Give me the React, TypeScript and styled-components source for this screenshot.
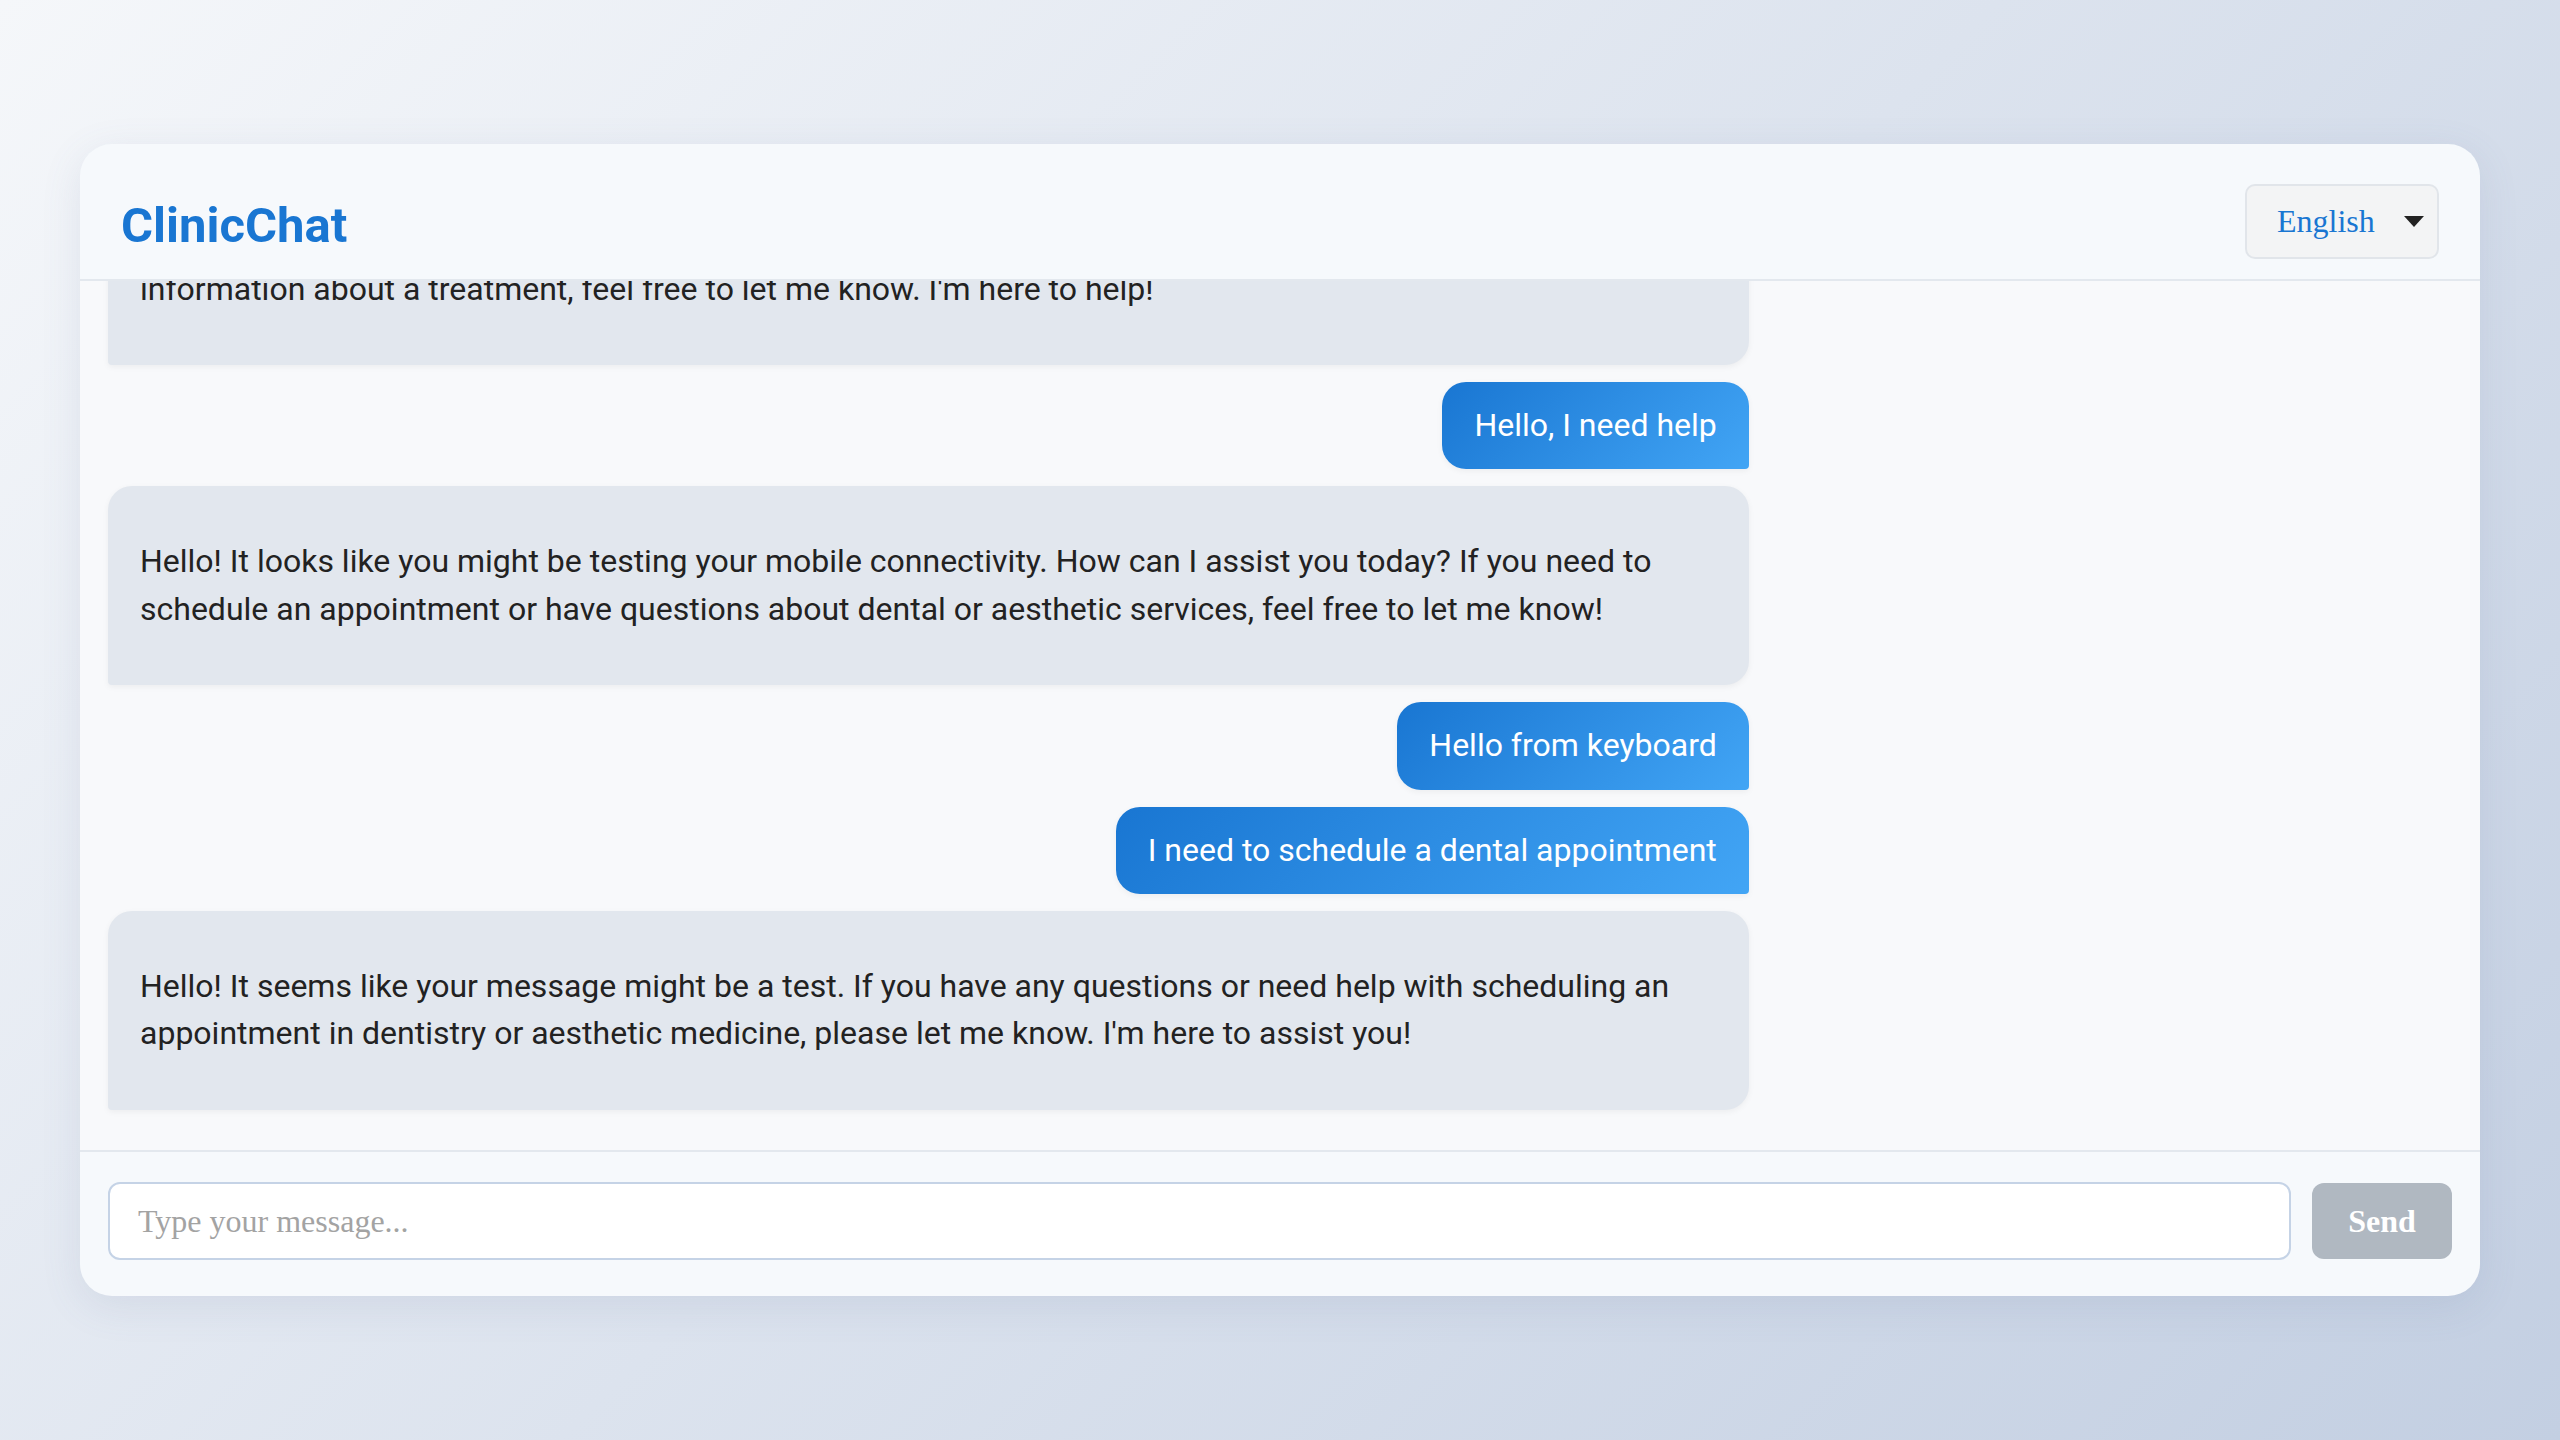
import React, { useLayoutEffect, useRef, useState } from 'react'
import styled, { createGlobalStyle } from 'styled-components'

const GlobalStyle = createGlobalStyle`
  * { box-sizing: border-box; }
  html, body, #root { margin: 0; padding: 0; height: 100%; }
  body {
    background: linear-gradient(135deg, #f5f7fa 0%, #c3cfe2 100%);
    font-family: Roboto, "Liberation Sans", sans-serif;
  }
`

type Message = { from: 'bot' | 'user'; text: string }

const messages: Message[] = [
  {
    from: 'bot',
    text: "Hello! Welcome to ClinicChat. I can help you book appointments for dentistry and aesthetic medicine. If you have questions about our services or need more\ninformation about a treatment, feel free to let me know. I'm here to help!",
  },
  { from: 'user', text: 'Hello, I need help' },
  {
    from: 'bot',
    text: 'Hello! It looks like you might be testing your mobile connectivity. How can I assist you today? If you need to schedule an appointment or have questions about dental or aesthetic services, feel free to let me know!',
  },
  { from: 'user', text: 'Hello from keyboard' },
  { from: 'user', text: 'I need to schedule a dental appointment' },
  {
    from: 'bot',
    text: "Hello! It seems like your message might be a test. If you have any questions or need help with scheduling an appointment in dentistry or aesthetic medicine, please let me know. I'm here to assist you!",
  },
]

const Page = styled.div`
  min-height: 100vh;
  display: flex;
  align-items: center;
  justify-content: center;
  padding: 0 80px;
`

const Card = styled.div`
  width: 100%;
  height: 80vh;
  display: flex;
  flex-direction: column;
  background: #f6f9fc;
  border-radius: 32px;
  box-shadow: 0 10px 40px rgba(90, 110, 150, 0.12);
  overflow: hidden;
`

const Header = styled.header`
  display: flex;
  align-items: center;
  justify-content: space-between;
  padding: 40px 41px 20px 41px;
  border-bottom: 2px solid #e3e8ee;
`

const Title = styled.h1`
  margin: 0;
  padding-top: 10px;
  font-size: 49px;
  line-height: 1.2;
  font-weight: 700;
  color: #1976d2;
`

const LangSelect = styled.button`
  width: 194px;
  height: 75px;
  display: flex;
  align-items: center;
  justify-content: space-between;
  padding: 0 13px 0 30px;
  background: #f3f4f5;
  border: 2px solid #e1e5ea;
  border-radius: 10px;
  font-family: "Liberation Serif", serif;
  font-size: 32px;
  color: #1976d2;
  cursor: pointer;
`

const Messages = styled.div`
  flex: 1;
  overflow-y: auto;
  padding: 24px 28px 40px;
  background: #f8f9fb;
  scrollbar-width: none;
  &::-webkit-scrollbar { display: none; }
`

const List = styled.div`
  width: 70%;
  display: flex;
  flex-direction: column;
  gap: 17px;
`

const Bubble = styled.div<{ $user?: boolean }>`
  align-self: ${p => (p.$user ? 'flex-end' : 'stretch')};
  padding: 20px 32px;
  font-size: 32px;
  line-height: 1.48;
  white-space: pre-line;
  color: ${p => (p.$user ? '#ffffff' : '#222222')};
  background: ${p => (p.$user ? 'linear-gradient(135deg, #1976d2 0%, #42a5f5 100%)' : '#e2e7ee')};
  border-radius: ${p => (p.$user ? '24px 24px 4px 24px' : '24px 24px 24px 4px')};
  box-shadow: 0 2px 6px rgba(0, 0, 0, 0.05);
`

const BotText = styled.p`
  margin: 1em 0;
`

const Footer = styled.form`
  display: flex;
  align-items: center;
  gap: 21px;
  padding: 30px 28px 36px;
  border-top: 2px solid #e3e8ee;
`

const Input = styled.input`
  flex: 1;
  height: 78px;
  padding: 0 28px;
  background: #ffffff;
  border: 2px solid #c5d3e6;
  border-radius: 12px;
  font-family: "Liberation Serif", serif;
  font-size: 32px;
  color: #222;
  outline: none;
  &::placeholder { color: #a3a3a3; }
`

const SendButton = styled.button`
  width: 140px;
  height: 76px;
  border: none;
  border-radius: 12px;
  background: #b0b8c1;
  color: #ffffff;
  font-family: "Liberation Serif", serif;
  font-size: 32px;
  font-weight: 700;
  &:disabled { cursor: not-allowed; }
`

const Caret = () => (
  <svg width="20" height="11" viewBox="0 0 20 11">
    <path d="M0 0 H20 L10 11 Z" fill="#222" />
  </svg>
)

const App = () => {
  const [draft, setDraft] = useState('')
  const listRef = useRef<HTMLDivElement>(null)

  useLayoutEffect(() => {
    if (listRef.current) listRef.current.scrollTop = listRef.current.scrollHeight
  }, [])

  return (
    <Page>
      <GlobalStyle />
      <Card>
        <Header>
          <Title>ClinicChat</Title>
          <LangSelect type="button">
            English
            <Caret />
          </LangSelect>
        </Header>

        <Messages ref={listRef}>
          <List>
            {messages.map((m, i) =>
              m.from === 'user' ? (
                <Bubble key={i} $user>{m.text}</Bubble>
              ) : (
                <Bubble key={i}>
                  <BotText>{m.text}</BotText>
                </Bubble>
              )
            )}
          </List>
        </Messages>

        <Footer onSubmit={e => e.preventDefault()}>
          <Input
            placeholder="Type your message..."
            value={draft}
            onChange={e => setDraft(e.target.value)}
          />
          <SendButton type="submit" disabled={!draft.trim()}>Send</SendButton>
        </Footer>
      </Card>
    </Page>
  )
}

export default App
